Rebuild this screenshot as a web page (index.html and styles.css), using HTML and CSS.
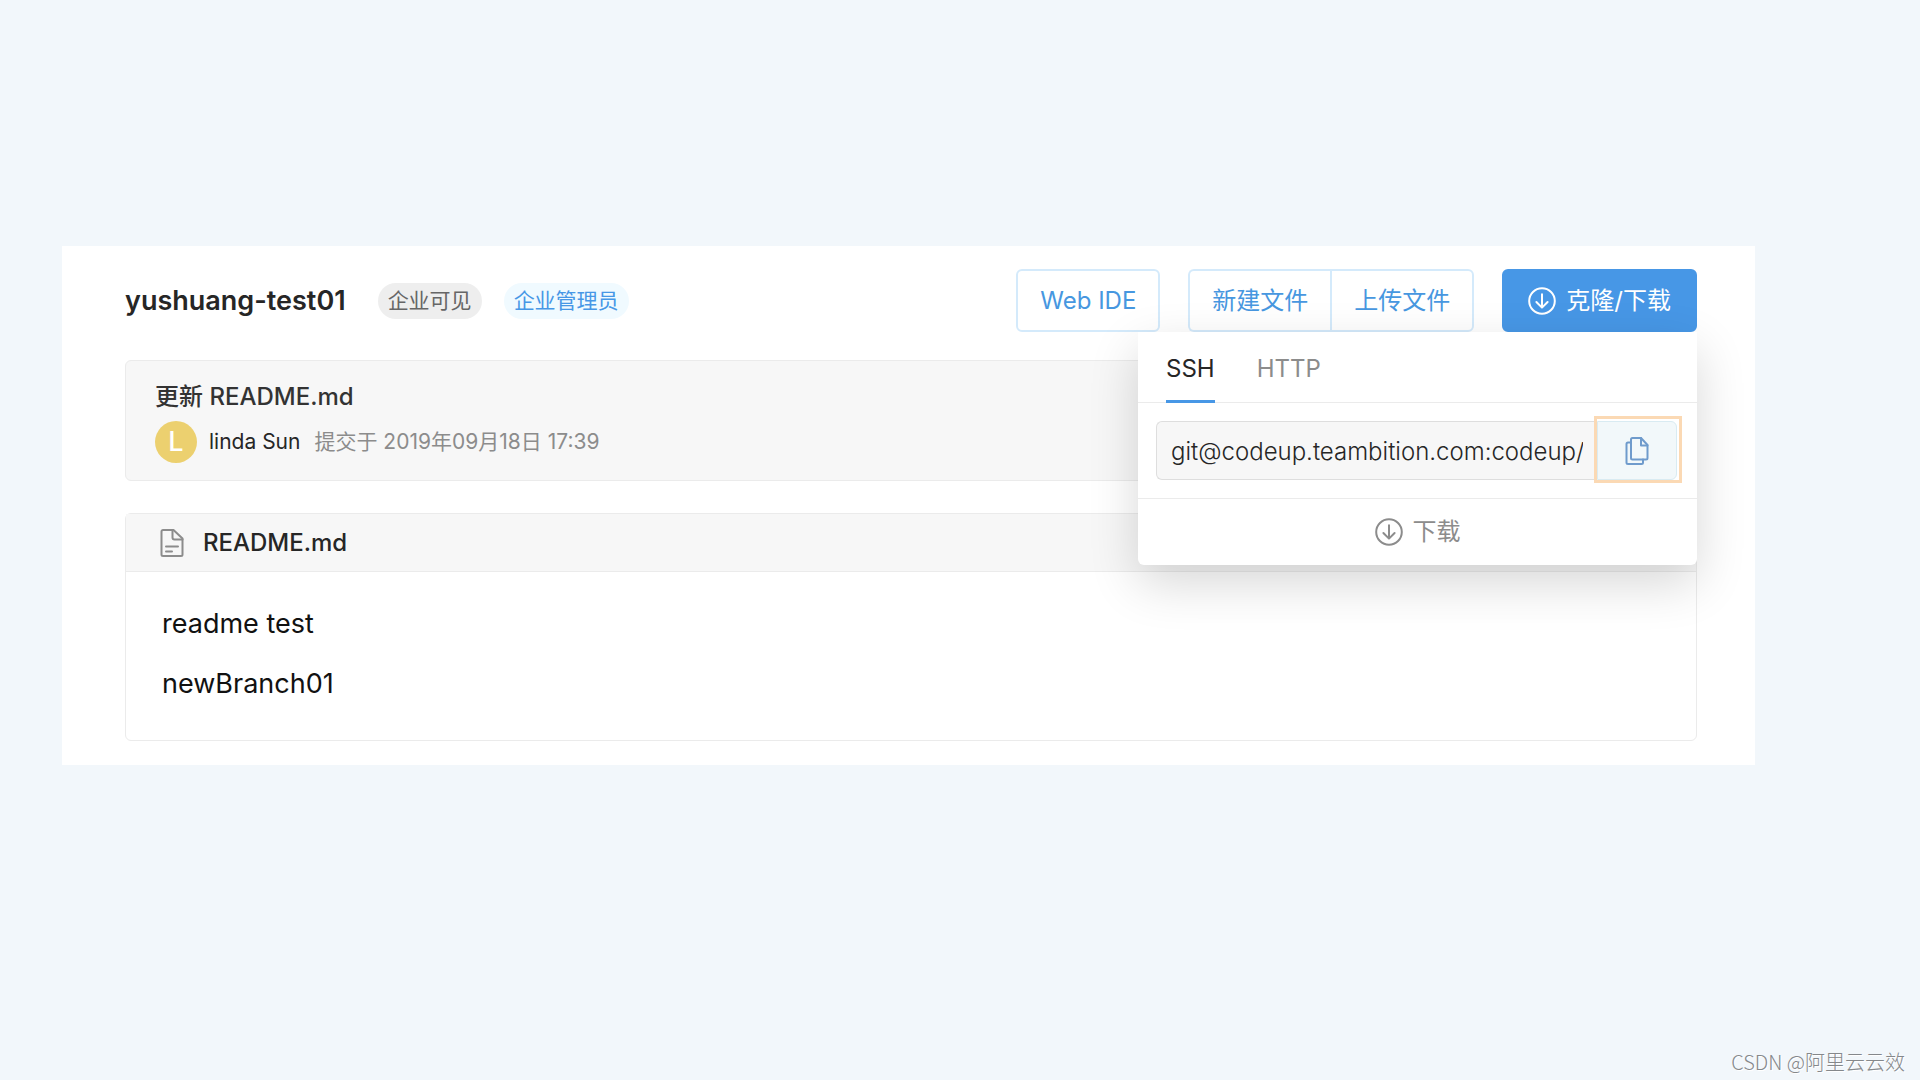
FILE: index.html
```html
<!DOCTYPE html>
<html lang="zh-CN">
<head>
<meta charset="utf-8">
<title>yushuang-test01</title>
<link rel="stylesheet" href="styles.css">
</head>
<body>
<svg class="sprite" aria-hidden="true">
  <symbol id="icon-download" viewBox="0 0 28 28">
    <circle cx="14" cy="14" r="12.8"/>
    <path d="M14 7.2v13.2M8.4 15l5.6 5.6 5.6-5.6"/>
  </symbol>
</svg>
<main class="panel">
  <header class="repo-header">
    <h1 class="repo-name">yushuang-test01</h1>
    <span class="tag">企业可见</span>
    <span class="tag tag-blue">企业管理员</span>
    <div class="actions">
      <button class="btn" type="button">Web IDE</button>
      <div class="btn-group">
        <button class="btn" type="button">新建文件</button>
        <button class="btn" type="button">上传文件</button>
      </div>
      <div class="clone">
        <button class="btn btn-primary" type="button" aria-expanded="true">
          <svg class="icon-round"><use href="#icon-download"/></svg>克隆/下载
        </button>
        <section class="dropdown">
          <nav class="tabs">
            <button class="tab tab-active" type="button">SSH</button>
            <button class="tab" type="button">HTTP</button>
          </nav>
          <div class="clone-row">
            <input class="clone-url" type="text" aria-label="SSH" readonly value="git@codeup.teambition.com:codeup/yushuang-test01.git">
            <button class="copy" type="button" aria-label="复制">
              <svg class="icon-copy" viewBox="0 0 24 28">
                <path d="M6 5.500H3A1.500 1.500 0 0 0 1.500 7v18.500A1.500 1.500 0 0 0 3 27h13.500a1.500 1.500 0 0 0 1.500-1.500V22.500"/>
                <path d="M7.500 1H16L22.500 8v13a1.500 1.500 0 0 1-1.500 1.500H7.500A1.500 1.500 0 0 1 6 21V2.500A1.500 1.500 0 0 1 7.500 1z"/>
                <path d="M16 1v7.500h6.500"/>
              </svg>
            </button>
          </div>
          <button class="download" type="button">
            <svg class="icon-round"><use href="#icon-download"/></svg>下载
          </button>
        </section>
      </div>
    </div>
  </header>

  <section class="box commit">
    <p class="commit-title">更新 README.md</p>
    <div class="commit-meta">
      <span class="avatar">L</span>
      <span class="author">linda Sun</span>
      <time class="date" datetime="2019-09-18T17:39">提交于 2019年09月18日 17:39</time>
    </div>
  </section>

  <article class="box readme">
    <h2 class="readme-head">
      <svg class="icon-file" viewBox="0 0 24 28">
        <path d="M3 1h10.500L22.500 9.500v16a1.500 1.500 0 0 1-1.500 1.500H3a1.500 1.500 0 0 1-1.500-1.500v-23A1.500 1.500 0 0 1 3 1z"/>
        <path d="M12.500 1v7.500a2 2 0 0 0 2 2h8M6 17.500h12M6 22.500h6"/>
      </svg>
      README.md
    </h2>
    <div class="readme-body">
      <p>readme test</p>
      <p>newBranch01</p>
    </div>
  </article>
</main>
<footer class="watermark">CSDN @阿里云云效</footer>
</body>
</html>
```
FILE: styles.css
```css
* {
  box-sizing: border-box;
}

body {
  margin: 0;
  min-height: 100vh;
  display: flex;
  flex-direction: column;
  background: #f2f7fb;
  color: #262626;
  font-family: Inter, "Noto Sans CJK SC", sans-serif;
  font-size: 24px;
  line-height: 36px;
}

h1,
h2,
p {
  margin: 0;
}

button,
input {
  margin: 0;
  font: inherit;
  color: inherit;
}

button {
  border: 0;
  background: none;
  cursor: pointer;
}

svg {
  flex: none;
  fill: none;
  stroke: currentColor;
  stroke-width: 2;
  stroke-linecap: round;
  stroke-linejoin: round;
}

.sprite {
  position: absolute;
  width: 0;
  height: 0;
}

.panel {
  margin: 246px 165px 0 62px;
  padding: 23px 58px 24px 63px;
  background: #fff;
}

.repo-header {
  display: flex;
  align-items: center;
  margin-bottom: 28px;
}

.repo-name {
  margin-right: 32px;
  font-size: 27px;
  font-weight: 600;
}

.tag {
  margin-right: 22px;
  padding: 0 10px;
  border-radius: 18px;
  background: #eee;
  color: #666;
  font-size: 21px;
}

.tag-blue {
  background: #f0faff;
  color: #4797e6;
}

.actions {
  display: flex;
  gap: 28px;
  margin-left: auto;
}

.btn {
  display: flex;
  align-items: center;
  justify-content: center;
  height: 63px;
  padding: 0 22px;
  border: 2px solid #d4eafb;
  border-radius: 6px;
  background: #fff;
  color: #4797e0;
}

.btn-group {
  display: flex;
}

.btn-group .btn:first-child {
  border-right: 0;
  border-radius: 6px 0 0 6px;
}

.btn-group .btn:last-child {
  border-radius: 0 6px 6px 0;
}

.btn-primary {
  gap: 10px;
  padding: 0 24px;
  border-color: #4797e6;
  background: #4797e6;
  color: #fff;
}

.icon-round {
  width: 28px;
  height: 28px;
}

.clone {
  position: relative;
}

.dropdown {
  position: absolute;
  top: 100%;
  right: 0;
  width: 559px;
  border-radius: 0 0 6px 6px;
  background: #fff;
  box-shadow: 0 18px 50px rgba(0, 0, 0, 0.16);
}

.tabs {
  display: flex;
  gap: 42px;
  height: 71px;
  padding: 0 28px;
  border-bottom: 1px solid #ebebeb;
}

.tab {
  height: 71px;
  padding: 6px 0 0;
  border-bottom: 3px solid transparent;
  color: #8c8c8c;
}

.tab-active {
  border-color: #4797e6;
  color: #262626;
}

.clone-row {
  display: flex;
  padding: 18px 20px 18px 18px;
  border-bottom: 1px solid #ebebeb;
}

.clone-url {
  flex: 1;
  min-width: 0;
  height: 59px;
  padding: 2px 14px 0;
  border: 1px solid #dedede;
  border-right: 0;
  border-radius: 6px 0 0 6px;
  background: #f7f7f7;
  font-weight: 350;
}

.copy {
  position: relative;
  display: flex;
  align-items: center;
  justify-content: center;
  width: 80px;
  height: 59px;
  padding: 0;
  border: 1px solid #d9ebf2;
  border-radius: 0 6px 6px 0;
  background: #f2f8fa;
  color: #6f9bcc;
}

/* highlight frame over the copy button */
.copy::after {
  content: "";
  position: absolute;
  inset: -6px -6px -4px -4px;
  border: 3px solid #fbd9b4;
}

.icon-copy,
.icon-file {
  width: 24px;
  height: 28px;
}

.download {
  display: flex;
  align-items: center;
  justify-content: center;
  gap: 10px;
  width: 100%;
  height: 66px;
  color: #8c8c8c;
}

.box {
  border: 1px solid #ebebeb;
  border-radius: 6px;
}

.commit {
  margin-bottom: 32px;
  padding: 18px 29px 17px;
  background: #f7f7f7;
}

.commit-title {
  color: #333;
  font-weight: 500;
}

.commit-meta {
  display: flex;
  align-items: center;
  margin-top: 6px;
  font-size: 21px;
}

.avatar {
  width: 42px;
  margin-right: 12px;
  border-radius: 50%;
  background: #ecd06f;
  color: #fff;
  font-size: 27px;
  font-weight: 500;
  line-height: 42px;
  text-align: center;
}

.author {
  margin-right: 14px;
}

.date {
  color: #8c8c8c;
}

.readme-head {
  display: flex;
  align-items: center;
  gap: 19px;
  height: 58px;
  padding: 0 34px;
  border-bottom: 1px solid #ebebeb;
  background: #f7f7f7;
  font-size: 24px;
  font-weight: 500;
}

.icon-file {
  color: #8c8c8c;
}

.readme-body {
  display: grid;
  gap: 24px;
  padding: 34px 36px 38px;
  color: #111;
  font-size: 27px;
}

.watermark {
  margin-top: auto;
  padding-right: 15px;
  color: #85888b;
  font-family: "Noto Sans CJK SC", sans-serif;
  font-size: 20px;
  font-weight: 300;
  text-align: right;
  text-shadow: 1px 1px 0 #fff;
}
```
